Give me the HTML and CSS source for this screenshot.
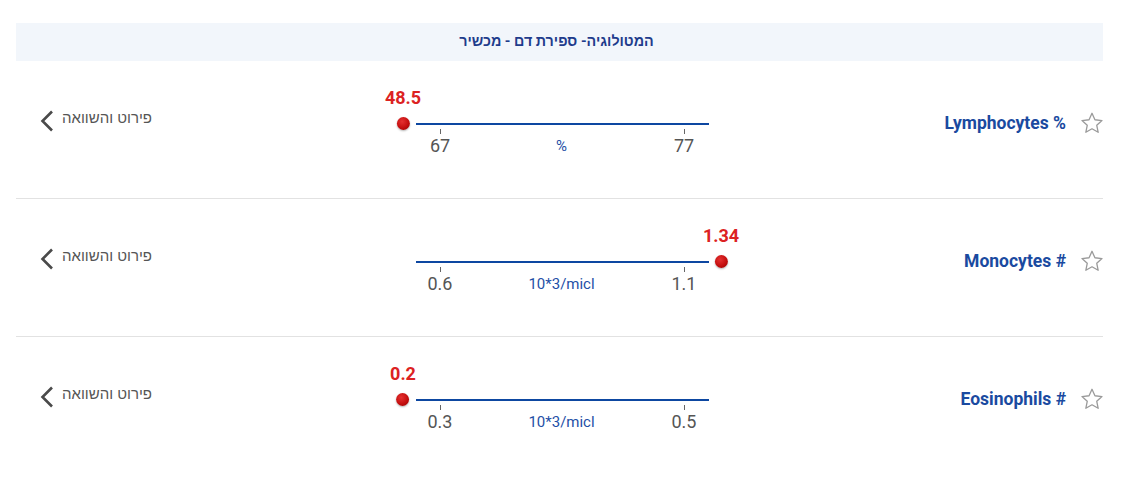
FILE: index.html
```html
<!DOCTYPE html>
<html lang="he">
<head>
<meta charset="utf-8">
<title>המטולוגיה- ספירת דם - מכשיר</title>
<link rel="stylesheet" href="styles.css">
</head>
<body>
<div class="panel">
  <div class="panel-head"><span dir="rtl">המטולוגיה- ספירת דם - מכשיר</span></div>

  <div class="row">
    <a class="link" href="#"><svg class="chev" width="14" height="22" viewBox="0 0 14 22"><polyline points="12,1.5 2.5,11 12,20.5"/></svg><span dir="rtl">פירוט והשוואה</span></a>
    <div class="range">
      <div class="track"></div>
      <div class="scale">
        <i class="tick"></i><i class="tick r"></i>
        <span class="lbl">67</span><span class="unit">%</span><span class="lbl r">77</span>
      </div>
      <div class="marker" style="left:33px"><b class="val">48.5</b><i class="dot"></i></div>
    </div>
    <div class="name"><span>Lymphocytes %</span><svg class="star" width="24" height="24" viewBox="0 0 24 24"><polygon points="12,2.3 14.94,8.76 21.99,9.56 16.76,14.35 18.17,21.29 12,17.8 5.83,21.29 7.24,14.35 2.01,9.56 9.06,8.76"/></svg></div>
  </div>

  <div class="row">
    <a class="link" href="#"><svg class="chev" width="14" height="22" viewBox="0 0 14 22"><polyline points="12,1.5 2.5,11 12,20.5"/></svg><span dir="rtl">פירוט והשוואה</span></a>
    <div class="range">
      <div class="track"></div>
      <div class="scale">
        <i class="tick"></i><i class="tick r"></i>
        <span class="lbl">0.6</span><span class="unit">10*3/micl</span><span class="lbl r">1.1</span>
      </div>
      <div class="marker" style="left:351px"><b class="val">1.34</b><i class="dot"></i></div>
    </div>
    <div class="name"><span>Monocytes #</span><svg class="star" width="24" height="24" viewBox="0 0 24 24"><polygon points="12,2.3 14.94,8.76 21.99,9.56 16.76,14.35 18.17,21.29 12,17.8 5.83,21.29 7.24,14.35 2.01,9.56 9.06,8.76"/></svg></div>
  </div>

  <div class="row last">
    <a class="link" href="#"><svg class="chev" width="14" height="22" viewBox="0 0 14 22"><polyline points="12,1.5 2.5,11 12,20.5"/></svg><span dir="rtl">פירוט והשוואה</span></a>
    <div class="range">
      <div class="track"></div>
      <div class="scale">
        <i class="tick"></i><i class="tick r"></i>
        <span class="lbl">0.3</span><span class="unit">10*3/micl</span><span class="lbl r">0.5</span>
      </div>
      <div class="marker" style="left:33px"><b class="val">0.2</b><i class="dot"></i></div>
    </div>
    <div class="name"><span>Eosinophils #</span><svg class="star" width="24" height="24" viewBox="0 0 24 24"><polygon points="12,2.3 14.94,8.76 21.99,9.56 16.76,14.35 18.17,21.29 12,17.8 5.83,21.29 7.24,14.35 2.01,9.56 9.06,8.76"/></svg></div>
  </div>
</div>
</body>
</html>
```

FILE: styles.css
```css
* { box-sizing: border-box; }
html, body { margin: 0; background: #fff; }
body { font-family: Roboto, "Liberation Sans", sans-serif; color: #333; }

.panel {
  margin-left: 16px;
  width: 1087px;
  padding-top: 23px;
}

.panel-head {
  height: 38px;
  background: #f2f6fb;
  display: flex;
  align-items: center;
  justify-content: center;
  font-weight: 700;
  font-size: 14.3px;
  color: #1f3c8c;
  padding-right: 6px;
  padding-bottom: 2px;
}

.row {
  display: grid;
  grid-template-columns: 354px 390px 1fr;
  height: 138px;
  border-bottom: 1px solid #e2e2e2;
  align-items: start;
}
.row.last { border-bottom: none; }

.link {
  display: flex;
  align-items: center;
  gap: 8px;
  padding-left: 24px;
  margin-top: 49px;
  height: 22px;
  text-decoration: none;
  color: #555;
  font-size: 15px;
  font-family: "Liberation Sans", Roboto, sans-serif;
}
.link span { padding-bottom: 7px; }
.chev { display: block; }
.chev polyline { fill: none; stroke: #4a4a4a; stroke-width: 2.6; }

.range {
  position: relative;
  height: 137px;
}
.track {
  margin: 62px 0 0 46px;
  width: 293px;
  height: 2px;
  background: #0d47a1;
}
.scale {
  margin: 4px 0 0 46px;
  width: 293px;
  display: grid;
  grid-template-columns: 48px 1fr 50px;
  grid-template-rows: 5px auto;
  justify-items: center;
}
.tick {
  grid-row: 1;
  grid-column: 1;
  width: 1px;
  height: 5px;
  background: #666;
}
.tick.r { grid-column: 3; }
.lbl {
  grid-row: 2;
  grid-column: 1;
  font-size: 18px;
  line-height: 21px;
  font-weight: 400;
  color: #555;
  margin-top: 1px;
}
.lbl.r { grid-column: 3; }
.unit {
  grid-row: 2;
  grid-column: 2;
  align-self: center;
  font-size: 15px;
  color: #1e4fa6;
  margin-top: 2px;
}

.marker {
  position: absolute;
  top: 26px;
  transform: translateX(-50%);
  display: flex;
  flex-direction: column;
  align-items: center;
}
.val {
  font-size: 18px;
  line-height: 21px;
  font-weight: 700;
  color: #dc2222;
  margin-bottom: 9px;
}
.dot {
  width: 13px;
  height: 13px;
  border-radius: 50%;
  background: radial-gradient(circle at 40% 35%, #e53030 0%, #c40f0f 55%, #8e0000 100%);
  box-shadow: 0 1px 2px rgba(0,0,0,0.3);
}

.name {
  display: flex;
  justify-content: flex-end;
  align-items: center;
  gap: 14px;
  margin-top: 50px;
  margin-right: -1px;
  height: 24px;
  font-size: 17.5px;
  font-weight: 700;
  color: #1a4aa0;
}
.star { display: block; }
.star polygon { fill: none; stroke: #9a9a9a; stroke-width: 1.3; stroke-linejoin: round; }
```
